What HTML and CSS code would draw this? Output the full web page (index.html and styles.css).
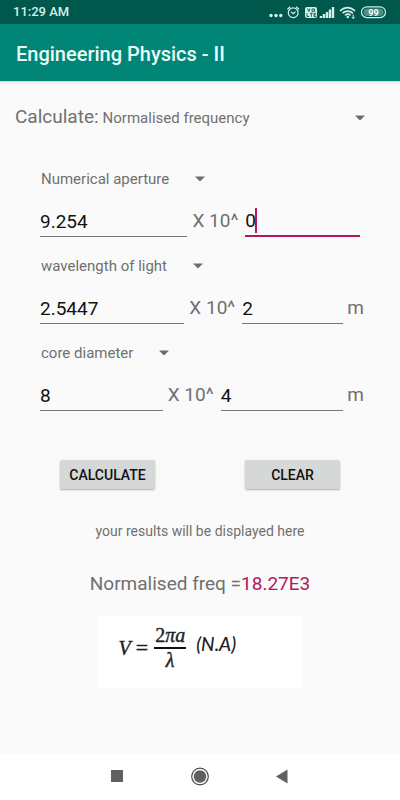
FILE: index.html
```html
<!DOCTYPE html>
<html lang="en">
<head>
<meta charset="utf-8">
<meta name="viewport" content="width=device-width, initial-scale=1">
<title>Engineering Physics - II</title>
<link rel="stylesheet" href="styles.css">
</head>
<body>
<div class="status">
  <span class="time">11:29 AM</span>
  <svg class="status-icons" width="120" height="24" viewBox="0 0 120 24" fill="none" stroke="#d5eee9" aria-hidden="true">
    <g fill="#d5eee9" stroke="none"><circle cx="3" cy="15.500" r="1.700"/><circle cx="8" cy="15.500" r="1.700"/><circle cx="12.800" cy="15.500" r="1.700"/></g>
    <circle cx="25.200" cy="12.700" r="4.900" stroke-width="1.200"/>
    <path d="M19.400 9.200l2.800-2.500M31 9.200l-2.800-2.500M23 11.800l2.200 1.900 2.300-1.900" stroke-width="1.200"/>
    <rect x="37" y="7" width="12" height="11" rx="2" fill="#d5eee9" stroke="none"/>
    <path d="M39.500 8.500l1.200 3 1.200-3M44 9h2.500v2.300H44zM39 13.300v3.200h2M42 13.300h2.600M43.300 13.300v3.500M48 13.300h-2v3.300h2M46 15h1.800" stroke="#00574b" stroke-width=".9"/>
    <path d="M53 18v-2M56 18v-4M59 18v-6M62 18V9.500M65 18V7" stroke-width="2.400"/>
    <g stroke-width="1.700"><path d="M72 10.800q7.500-6.500 15 0M74.500 13.200q5-4.200 10.500 0M77 15.400q2.800-2.400 5.600 0"/></g>
    <circle cx="79.800" cy="17" r="1.300" fill="#d5eee9" stroke="none"/>
    <path d="M85.200 14.500v4M83.700 17l1.500 1.500 1.500-1.500"/>
    <rect x="93.500" y="6.800" width="24" height="10.800" rx="5.400" stroke-width="1.200"/>
    <rect x="95.500" y="8.500" width="20" height="7.500" rx="3.700" fill="#4f8f86" stroke="none"/>
    <text x="105.500" y="15.500" class="battery" text-anchor="middle" stroke="none" fill="#fff">99</text>
  </svg>
</div>
<header class="appbar"><h1>Engineering Physics - II</h1></header>
<main>
  <div class="mode">
    <label for="mode">Calculate:</label>
    <span class="picker wide">
      <select id="mode"><option>Normalised frequency</option></select>
      <svg width="10" height="6" viewBox="0 0 10 6" aria-hidden="true"><path d="M0 .5h10L5 5.500z"/></svg>
    </span>
  </div>
  <form class="fields">
    <section>
      <span class="picker">
        <select aria-label="First quantity"><option>Numerical aperture</option></select>
        <svg width="10" height="6" viewBox="0 0 10 6" aria-hidden="true"><path d="M0 .5h10L5 5.500z"/></svg>
      </span>
      <div class="row aperture">
        <input type="text" value="9.254" aria-label="Numerical aperture">
        <label for="exp1">X 10^</label>
        <span class="active"><input id="exp1" type="text" value="0"><i class="caret"></i></span>
      </div>
    </section>
    <section>
      <span class="picker">
        <select aria-label="Second quantity"><option>wavelength of light</option></select>
        <svg width="10" height="6" viewBox="0 0 10 6" aria-hidden="true"><path d="M0 .5h10L5 5.500z"/></svg>
      </span>
      <div class="row wavelength">
        <input type="text" value="2.5447" aria-label="Wavelength of light">
        <label for="exp2">X 10^</label>
        <input id="exp2" type="text" value="2">
        <span class="unit">m</span>
      </div>
    </section>
    <section>
      <span class="picker">
        <select aria-label="Third quantity"><option>core diameter</option></select>
        <svg width="10" height="6" viewBox="0 0 10 6" aria-hidden="true"><path d="M0 .5h10L5 5.500z"/></svg>
      </span>
      <div class="row diameter">
        <input type="text" value="8" aria-label="Core diameter">
        <label for="exp3">X 10^</label>
        <input id="exp3" type="text" value="4">
        <span class="unit">m</span>
      </div>
    </section>
    <div class="actions">
      <button type="button">CALCULATE</button>
      <button type="reset">CLEAR</button>
    </div>
  </form>
  <p class="hint">your results will be displayed here</p>
  <p class="result">Normalised freq =<span>18.27E3</span></p>
  <div class="formula">
    <i class="var">V</i>
    <span class="equals">=</span>
    <span class="fraction"><span>2<i>πa</i></span><i>λ</i></span>
    <i class="na">(N.A)</i>
  </div>
</main>
<nav class="navbar">
  <button type="button" aria-label="Recent apps"><svg width="20" height="20" viewBox="0 0 20 20"><path d="M3 3h12v12H3z" fill="#606060"/></svg></button>
  <button type="button" aria-label="Home"><svg width="20" height="20" viewBox="0 0 20 20"><circle cx="10" cy="9.500" r="8.300" fill="none" stroke="#4a4a4a" stroke-width="1.200"/><circle cx="10" cy="9.500" r="6.200" fill="#606060"/></svg></button>
  <button type="button" aria-label="Back"><svg width="20" height="20" viewBox="0 0 20 20"><path d="M4 9.500l11.500-7v14z" fill="#606060"/></svg></button>
</nav>
</body>
</html>
```
FILE: styles.css
```css
* { box-sizing: border-box; }
body {
  margin: 0;
  min-height: 100vh;
  display: flex;
  flex-direction: column;
  background: #fafafa;
  color: #707070;
  font-family: Roboto, sans-serif;
  font-size: 15px;
}
input, select, button { font: inherit; color: inherit; border: 0; background: none; padding: 0; margin: 0; border-radius: 0; }
select { appearance: none; outline: none; }
p, h1 { margin: 0; }

.status {
  display: flex;
  justify-content: space-between;
  align-items: center;
  height: 24px;
  padding: 0 12px 0 13px;
  background: #00574b;
  color: #d5eee9;
}
.time { font-size: 13px; font-weight: 500; line-height: 24px; }
.battery { font-size: 9px; font-weight: 700; }

.appbar {
  padding: 16px 16px 13px;
  background: #008577;
  color: #e8fbf8;
  box-shadow: 0 1px 2px rgba(0, 0, 0, .2);
}
.appbar h1 { font-size: 20px; line-height: 28px; font-weight: 500; }

main { flex: 1; }
.mode { display: flex; align-items: baseline; gap: 4px; padding: 24px 35px 0 15px; }
.mode label { font-size: 19px; line-height: 24px; }

.picker { display: inline-flex; align-items: center; gap: 25px; height: 24px; }
.picker select { height: 24px; }
.picker svg { fill: #6c6c6c; }
.wide { flex: 1; }
.wide select { flex: 1; }

.fields { padding: 37px 36px 0 40px; }
.fields section { height: 87px; }
.fields .picker { padding-left: 1px; }
.row { display: flex; align-items: flex-start; padding-top: 14px; font-size: 19px; line-height: 32px; }
.row input { width: 100%; min-width: 0; height: 32px; padding-top: 2px; color: #111; border-bottom: 1px solid #777; outline: none; }
.row label { flex: none; margin: 0 7px 0 5px; }
.unit { flex: none; margin-left: 4px; }
.aperture { padding-right: 4px; }
.aperture > input { flex: 9; }
.active { position: relative; flex: 7; display: flex; }
.active input { border-bottom: 2px solid #b5175e; }
.caret { position: absolute; left: 10px; top: 3px; width: 2px; height: 25px; background: #b5175e; }
.wavelength > input:first-child { flex: 10; }
.wavelength > input { flex: 7; }
.diameter > input { flex: 1; }

.actions { display: flex; justify-content: space-between; padding: 32px 24px 0 20px; }
.actions button {
  width: 95px;
  height: 29px;
  border-radius: 2px;
  background: #d6d7d7;
  color: #111;
  font-size: 14px;
  font-weight: 500;
  box-shadow: 0 1px 2px rgba(0, 0, 0, .3);
}
.hint { margin-top: 32px; text-align: center; font-size: 14px; line-height: 20px; }
.result { margin-top: 30px; text-align: center; font-size: 19px; line-height: 26px; }
.result span { color: #b5175e; }

.formula {
  display: flex;
  width: 205px;
  height: 72px;
  margin: 19px auto 0;
  padding: 8px 0 0 21px;
  background: #fff;
  color: #222;
  font-family: "Liberation Serif", serif;
  font-size: 20px;
  -webkit-text-stroke: 0.4px #222;
}
.var, .equals { line-height: 48px; }
.equals { margin-left: 5px; font-size: 22px; }
.fraction { display: flex; flex-direction: column; align-items: center; margin-left: 6px; line-height: 23px; }
.fraction > span { padding: 0 1px; border-bottom: 2px solid #111; }
.na { margin-left: 10px; font-family: Lato, sans-serif; font-size: 19px; line-height: 40px; -webkit-text-stroke: 0; font-weight: 500; }

.navbar { display: flex; justify-content: center; gap: 62px; height: 47px; background: #fff; }
.navbar button { width: 20px; display: grid; place-items: center; }
```
